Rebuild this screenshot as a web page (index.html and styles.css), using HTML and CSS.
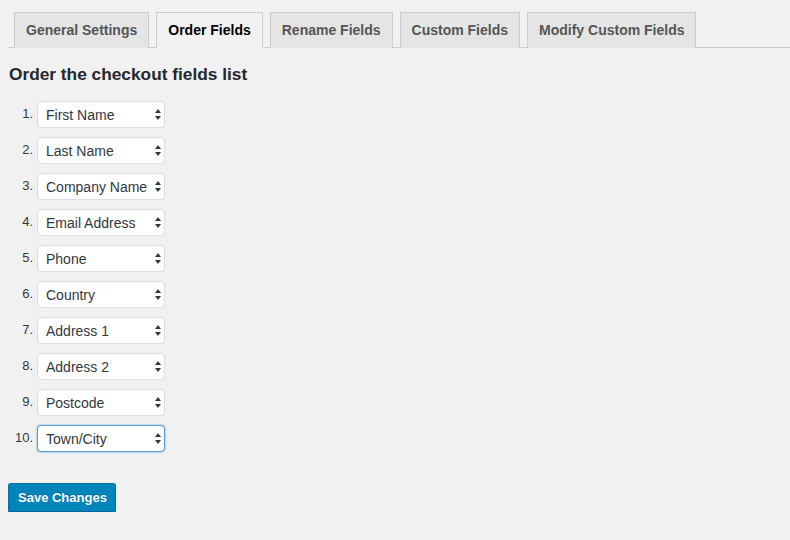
FILE: index.html
```html
<!DOCTYPE html>
<html>
<head>
    <meta charset="utf-8">
    <title>Checkout Fields - Order Fields</title>
    <link rel="stylesheet" href="styles.css">
</head>
<body>
    <div class="wrap">
        <nav class="nav-tab-wrapper">
            <a href="#" class="nav-tab">General Settings</a>
            <a href="#" class="nav-tab nav-tab-active">Order Fields</a>
            <a href="#" class="nav-tab">Rename Fields</a>
            <a href="#" class="nav-tab">Custom Fields</a>
            <a href="#" class="nav-tab">Modify Custom Fields</a>
        </nav>

        <form>
            <h3 class="section-title">Order the checkout fields list</h3>

            <ol class="field-order">
                <li><span class="field-num">1.</span><span class="select-wrap"><select><option>First Name</option></select></span></li>
                <li><span class="field-num">2.</span><span class="select-wrap"><select><option>Last Name</option></select></span></li>
                <li><span class="field-num">3.</span><span class="select-wrap"><select><option>Company Name</option></select></span></li>
                <li><span class="field-num">4.</span><span class="select-wrap"><select><option>Email Address</option></select></span></li>
                <li><span class="field-num">5.</span><span class="select-wrap"><select><option>Phone</option></select></span></li>
                <li><span class="field-num">6.</span><span class="select-wrap"><select><option>Country</option></select></span></li>
                <li><span class="field-num">7.</span><span class="select-wrap"><select><option>Address 1</option></select></span></li>
                <li><span class="field-num">8.</span><span class="select-wrap"><select><option>Address 2</option></select></span></li>
                <li><span class="field-num">9.</span><span class="select-wrap"><select><option>Postcode</option></select></span></li>
                <li><span class="field-num">10.</span><span class="select-wrap"><select class="is-focused"><option>Town/City</option></select></span></li>
            </ol>

            <p class="submit">
                <button type="button" class="button-primary">Save Changes</button>
            </p>
        </form>
    </div>
</body>
</html>
```

FILE: styles.css
```css
body {
    margin: 0;
    background: #f1f1f1;
    color: #444;
    font-family: "Liberation Sans", Arial, sans-serif;
    font-size: 13px;
}

.wrap {
    padding: 12px 0 0 8px;
}

/* tabs */
.nav-tab-wrapper {
    display: flex;
    gap: 7px;
    padding-left: 6px;
    border-bottom: 1px solid #ccc;
}
.nav-tab {
    margin-bottom: -1px;
    padding: 5px 11px;
    border: 1px solid #ccc;
    border-bottom: none;
    background: #e5e5e5;
    color: #555;
    font-size: 14px;
    font-weight: bold;
    line-height: 24px;
    text-decoration: none;
}
.nav-tab-active {
    background: #f1f1f1;
    color: #000;
    border-bottom: 1px solid #f1f1f1;
}

.section-title {
    margin: 14px 0 15px 1px;
    color: #23282d;
    font-size: 17.3px;
    line-height: 24px;
}

/* field list */
.field-order {
    margin: 0;
    padding: 0;
    list-style: none;
    display: flex;
    flex-direction: column;
    gap: 9px;
}
.field-order li {
    display: flex;
    align-items: center;
    gap: 4px;
}
.field-num {
    width: 25px;
    padding-bottom: 2px;
    text-align: right;
    color: #32373c;
}
.select-wrap {
    position: relative;
    display: block;
}
.select-wrap select {
    appearance: none;
    -webkit-appearance: none;
    display: block;
    width: 128px;
    height: 27px;
    margin: 0;
    padding: 0 16px 0 8px;
    border: 1px solid #ddd;
    border-radius: 4px;
    background: #fff;
    color: #32373c;
    font-family: "Liberation Sans", Arial, sans-serif;
    font-size: 14px;
    box-shadow: inset 0 1px 2px rgba(0,0,0,.04);
    outline: none;
}
.select-wrap select.is-focused {
    border-color: #5b9dd9;
    box-shadow: 0 0 2px rgba(30,140,190,.8);
}
.select-wrap::before,
.select-wrap::after {
    content: "";
    position: absolute;
    right: 4px;
    border-left: 3px solid transparent;
    border-right: 3px solid transparent;
    pointer-events: none;
}
.select-wrap::before {
    top: 8px;
    border-bottom: 4px solid #32373c;
}
.select-wrap::after {
    top: 15px;
    border-top: 4px solid #32373c;
}

/* submit */
.submit {
    margin: 31px 0 0;
}
.button-primary {
    height: 29px;
    padding: 0 8px 1px 9px;
    border: 1px solid #0073aa;
    border-bottom-color: #006799;
    border-radius: 3px;
    background: #0085ba;
    color: #fff;
    font-family: "Liberation Sans", Arial, sans-serif;
    font-size: 13px;
    font-weight: bold;
    text-shadow: 0 -1px 1px #006799;
    box-shadow: 0 1px 0 #006799;
}
```
